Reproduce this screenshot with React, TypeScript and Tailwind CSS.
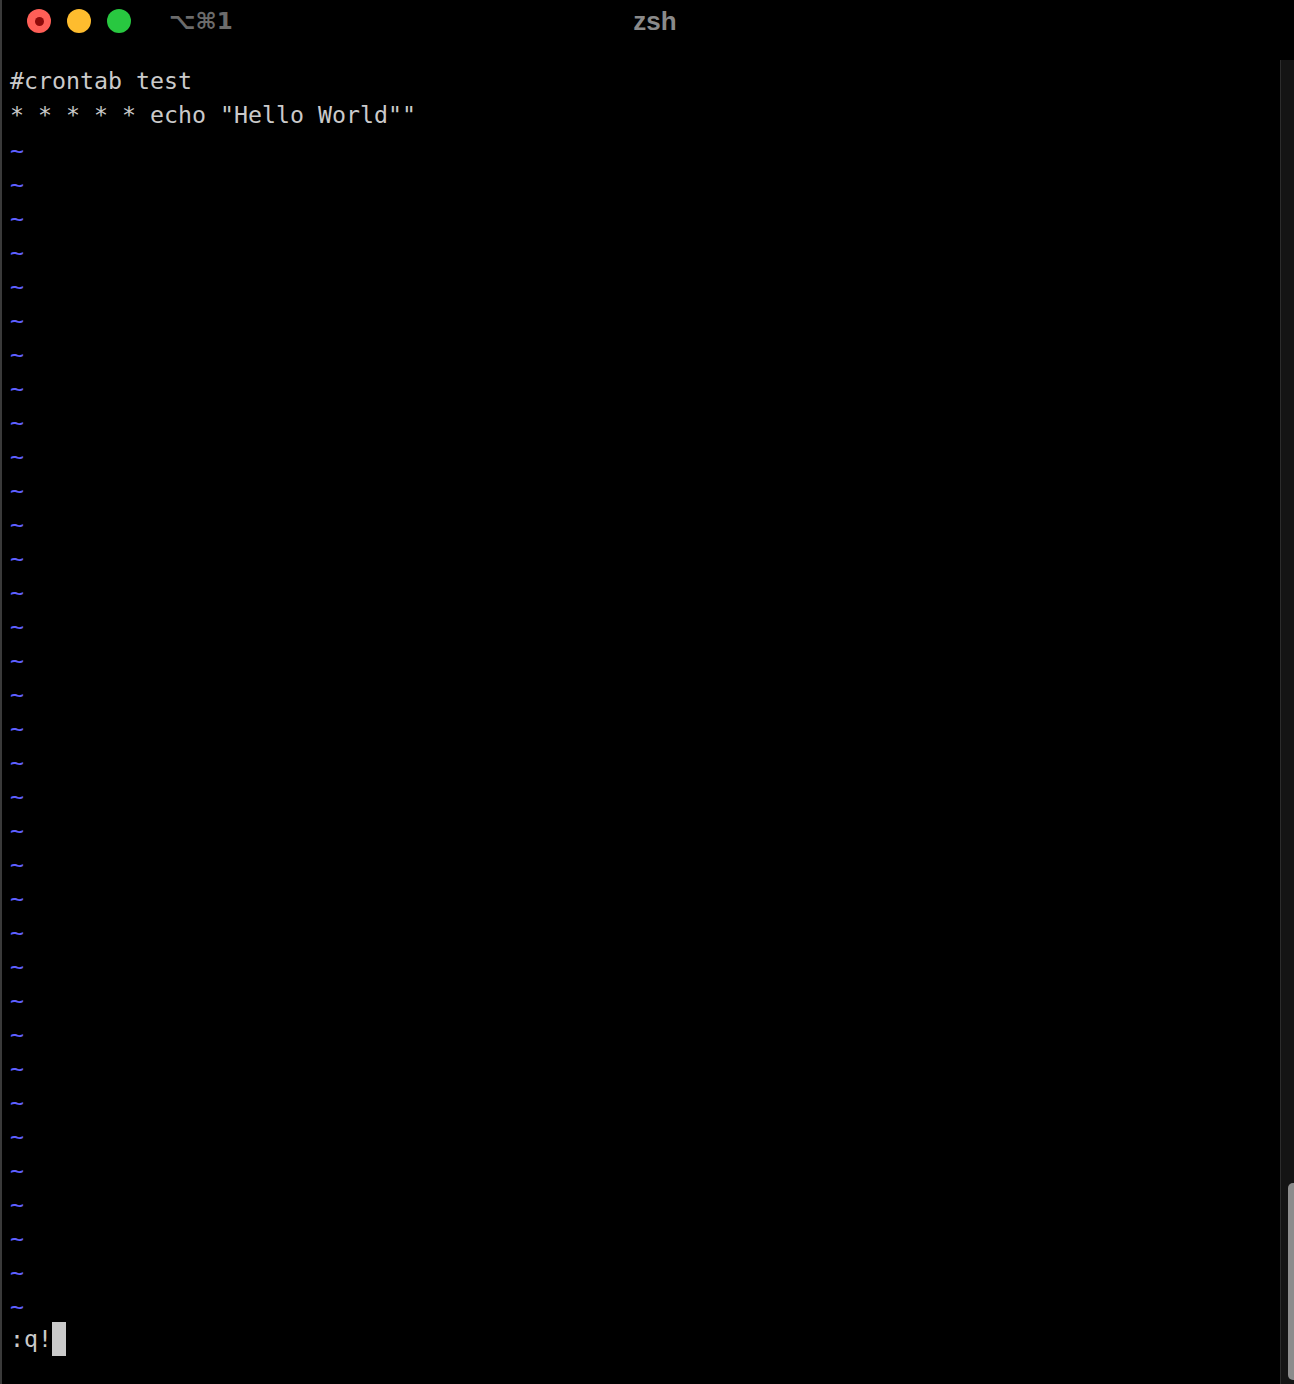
import React from "react";

const mono = { fontFamily: '"DejaVu Sans Mono", "Liberation Mono", monospace' };

export default function App() {
  const tildes = Array.from({ length: 35 });
  return (
    <div className="w-[1294px] h-[1384px] bg-black border-l-2 border-[#3a3a3a] flex flex-col overflow-hidden">
      <div className="h-[60px] shrink-0 grid grid-cols-[1fr_auto_1fr] items-center" style={{ fontFamily: '"Liberation Sans", Arial, sans-serif' }}>
        <div className="flex items-center pl-[25px] -mt-[18px]">
          <div className="w-[24px] h-[24px] rounded-full bg-[#ff5f57] flex items-center justify-center">
            <div className="w-[9px] h-[9px] rounded-full bg-[#8f0a0a]" />
          </div>
          <div className="w-[24px] h-[24px] rounded-full bg-[#febc2e] ml-[16px]" />
          <div className="w-[24px] h-[24px] rounded-full bg-[#28c840] ml-[16px]" />
          <div className="ml-[38px] text-[23px] font-bold text-[#6b6b6b] leading-none" style={{ fontFamily: '"DejaVu Sans", sans-serif' }}>⌥⌘1</div>
        </div>
        <div className="text-[26px] font-bold text-[#8a8a8a] ml-[14px] -mt-[18px] leading-none">zsh</div>
        <div />
      </div>
      <div className="flex-1 flex min-h-0">
        <div className="flex-1 pl-[8px] pt-[4px] text-[23.25px] leading-[34px] text-[#cacaca] whitespace-pre" style={mono}>
          <div className="h-[34px]">#crontab test</div>
          <div className="h-[34px]">* * * * * echo "Hello World""</div>
          {tildes.map((_, i) => (
            <div key={i} className="h-[34px] pt-[2px] text-[#5f5fff]">~</div>
          ))}
          <div className="h-[34px] flex items-center">
            <span>:q!</span>
            <span className="inline-block w-[14px] h-[34px] bg-[#cacaca]" />
          </div>
        </div>
        <div className="w-[14px] shrink-0 bg-[#141414] border-l border-[#2c2c2c] flex flex-col justify-end pb-[4px] pl-[7px]">
          <div className="w-[6px] h-[197px] rounded-l-[5px] bg-[#8c8c8c]" />
        </div>
      </div>
    </div>
  );
}
